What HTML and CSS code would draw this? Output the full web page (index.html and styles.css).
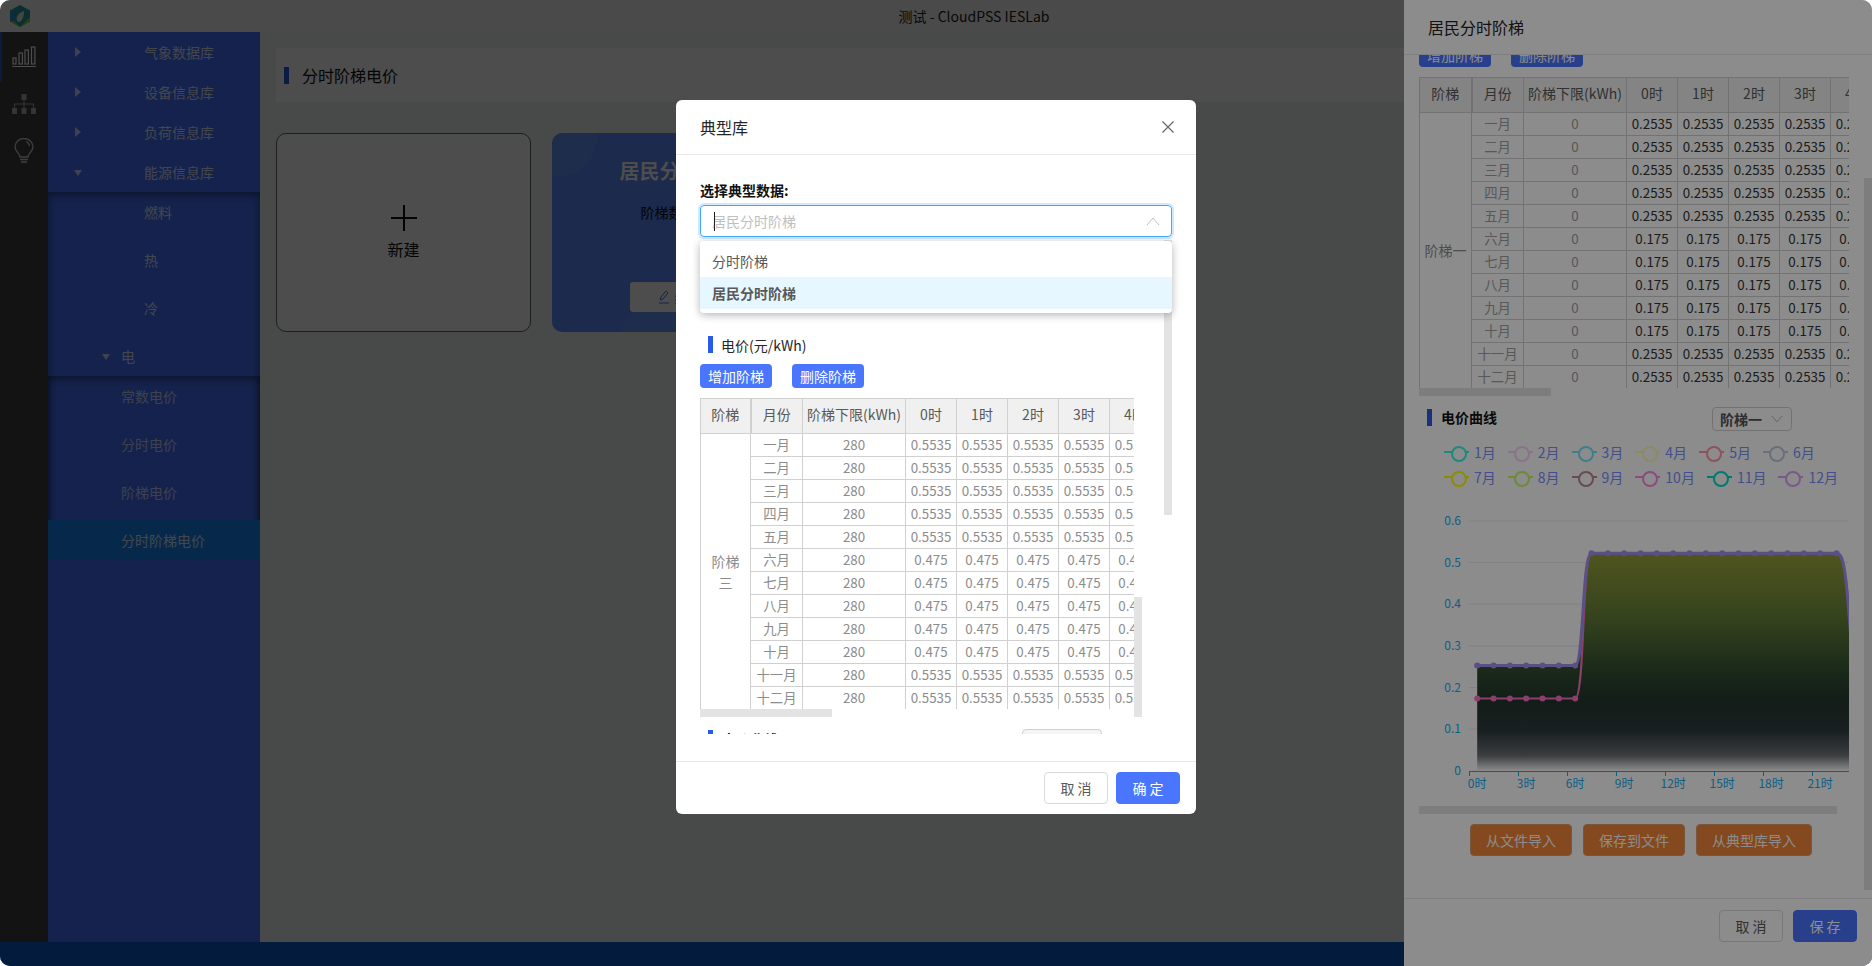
FILE: index.html
```html
<!DOCTYPE html>
<html lang="zh-CN">
<head>
    <meta charset="UTF-8">
    <title>测试 - CloudPSS IESLab</title>
    <link rel="stylesheet" href="styles.css">
</head>
<body>
<div class="window">
    <div class="app">
        <div class="topbar">
            <svg class="logo" viewBox="0 0 20 22">
                <path d="M10 0 L20 5.5 V16.5 L10 22 L0 16.5 V5.5 Z" fill="#1f9fa8"/>
                <path d="M0 12 L10 22 L20 12 V16.5 L10 22 L0 16.5 Z" fill="#8fd03c"/>
                <path d="M0 5.5 L6 9 V15 L0 16.5 Z" fill="#2e8fd0"/>
                <path d="M14 6 C14 12 12 17 8 17 C5 14 7 8 14 6 Z" fill="#e8e8d8"/>
            </svg>
            <span class="topbar-title">测试 - CloudPSS IESLab</span>
        </div>
        <div class="middle">
            <div class="rail">
                <div class="rail-item rail-active">
                    <svg width="26" height="22" viewBox="0 0 26 22" fill="none" stroke="#fff" stroke-width="1.2">
                        <rect x="2" y="12" width="3" height="6"/>
                        <rect x="8" y="7" width="3.4" height="11"/>
                        <rect x="14" y="4" width="3.4" height="14"/>
                        <rect x="20.5" y="1" width="3.4" height="17"/>
                        <path d="M1 20.5 H25"/>
                    </svg>
                </div>
                <div class="rail-item">
                    <svg width="26" height="22" viewBox="0 0 26 22" fill="#b0b0b0">
                        <rect x="10.5" y="1" width="5" height="6"/>
                        <rect x="1" y="15" width="5" height="6"/>
                        <rect x="10.5" y="15" width="5" height="6"/>
                        <rect x="20" y="15" width="5" height="6"/>
                        <path d="M12.5 7 H13.5 V10.5 H23 V15 H22 V11.5 H13.5 V15 H12.5 V11.5 H4 V15 H3 V10.5 H12.5 Z"/>
                    </svg>
                </div>
                <div class="rail-item">
                    <svg width="22" height="26" viewBox="0 0 22 26" fill="none" stroke="#d0d0d0" stroke-width="1.3">
                        <path d="M7 19 C7 15 2 13.5 2 9 A9 8.5 0 0 1 20 9 C20 13.5 15 15 15 19 Z"/>
                        <path d="M7 21.5 H15 M8 24 H14"/>
                        <path d="M13 3.5 A5.5 5.5 0 0 1 16.5 8"/>
                    </svg>
                </div>
            </div>
            <div class="sidebar">
                <div class="menu-item"><span class="arrow-r"></span>气象数据库</div>
                <div class="menu-item"><span class="arrow-r"></span>设备信息库</div>
                <div class="menu-item"><span class="arrow-r"></span>负荷信息库</div>
                <div class="menu-item"><span class="arrow-d"></span>能源信息库</div>
                <div class="submenu">
                    <div class="menu-item sub-item">燃料</div>
                    <div class="menu-item sub-item">热</div>
                    <div class="menu-item sub-item">冷</div>
                    <div class="menu-item sub-item sub-open"><span class="arrow-d"></span>电</div>
                    <div class="submenu submenu-inner">
                        <div class="menu-item sub-item leaf">常数电价</div>
                        <div class="menu-item sub-item leaf">分时电价</div>
                        <div class="menu-item sub-item leaf">阶梯电价</div>
                        <div class="menu-item sub-item leaf leaf-active">分时阶梯电价</div>
                    </div>
                </div>
            </div>
            <div class="main">
                <div class="page-head"><span class="page-bar"></span>分时阶梯电价</div>
                <div class="cards">
                    <div class="card card-new">
                        <svg width="26" height="26" viewBox="0 0 26 26" fill="#111"><rect x="12" y="0" width="2" height="26"/><rect x="0" y="12" width="26" height="2"/></svg>
                        <span class="card-new-text">新建</span>
                    </div>
                    <div class="card card-tpl">
                        <span class="tpl-circle-a"></span>
                        <span class="tpl-circle-b"></span>
                        <div class="tpl-title">居民分时阶梯</div>
                        <div class="tpl-info">阶梯数量：3</div>
                        <div class="tpl-btn">
                            <svg width="12" height="14" viewBox="0 0 12 14" fill="none" stroke="#4a76ff" stroke-width="1"><path d="M2 10 L3 7 L8 1 L10 3 L5 9 Z M1 13 H11"/></svg>
                            编辑
                        </div>
                    </div>
                </div>
            </div>
        </div>
        <div class="bottombar"></div>
    </div>

    <div class="mask"></div>

    <div class="drawer">
        <div class="drawer-head">居民分时阶梯</div>
        <div class="drawer-body">
            <div class="drawer-scroll">
                <div class="btn-row">
                    <button class="btn-tier">增加阶梯</button>
                    <button class="btn-tier">删除阶梯</button>
                </div>
                <div class="tbl-wrap tbl-wrap-drawer">
                    <div class="tbl-clip">
                        <table class="tbl tbl-drawer">
                            <colgroup><col class="c-tier"><col class="c-month"><col class="c-limit"><col class="c-h"><col class="c-h"><col class="c-h"><col class="c-h"><col class="c-h"></colgroup>
                            <tr class="tbl-head"><th>阶梯</th><th class="th-month">月份</th><th>阶梯下限(kWh)</th><th>0时</th><th>1时</th><th>2时</th><th>3时</th><th>4时</th></tr>
                            <tr><td rowspan="12" class="td-tier">阶梯一</td><td class="td-m">一月</td><td class="td-m">0</td><td>0.2535</td><td>0.2535</td><td>0.2535</td><td>0.2535</td><td>0.2535</td></tr>
                            <tr><td class="td-m">二月</td><td class="td-m">0</td><td>0.2535</td><td>0.2535</td><td>0.2535</td><td>0.2535</td><td>0.2535</td></tr>
                            <tr><td class="td-m">三月</td><td class="td-m">0</td><td>0.2535</td><td>0.2535</td><td>0.2535</td><td>0.2535</td><td>0.2535</td></tr>
                            <tr><td class="td-m">四月</td><td class="td-m">0</td><td>0.2535</td><td>0.2535</td><td>0.2535</td><td>0.2535</td><td>0.2535</td></tr>
                            <tr><td class="td-m">五月</td><td class="td-m">0</td><td>0.2535</td><td>0.2535</td><td>0.2535</td><td>0.2535</td><td>0.2535</td></tr>
                            <tr><td class="td-m">六月</td><td class="td-m">0</td><td>0.175</td><td>0.175</td><td>0.175</td><td>0.175</td><td>0.175</td></tr>
                            <tr><td class="td-m">七月</td><td class="td-m">0</td><td>0.175</td><td>0.175</td><td>0.175</td><td>0.175</td><td>0.175</td></tr>
                            <tr><td class="td-m">八月</td><td class="td-m">0</td><td>0.175</td><td>0.175</td><td>0.175</td><td>0.175</td><td>0.175</td></tr>
                            <tr><td class="td-m">九月</td><td class="td-m">0</td><td>0.175</td><td>0.175</td><td>0.175</td><td>0.175</td><td>0.175</td></tr>
                            <tr><td class="td-m">十月</td><td class="td-m">0</td><td>0.175</td><td>0.175</td><td>0.175</td><td>0.175</td><td>0.175</td></tr>
                            <tr><td class="td-m">十一月</td><td class="td-m">0</td><td>0.2535</td><td>0.2535</td><td>0.2535</td><td>0.2535</td><td>0.2535</td></tr>
                            <tr><td class="td-m">十二月</td><td class="td-m">0</td><td>0.2535</td><td>0.2535</td><td>0.2535</td><td>0.2535</td><td>0.2535</td></tr>
                        </table>
                    </div>
                    <div class="sb-h"></div>
                </div>
                <div class="curve-row">
                    <span class="sec-bar"></span>
                    <span class="curve-title">电价曲线</span>
                    <div class="sel-sm sel-drawer">阶梯一
                        <svg width="12" height="8" viewBox="0 0 12 8" fill="none" stroke="#bbb"><path d="M1 1 L6 7 L11 1"/></svg>
                    </div>
                </div>
                <div class="legend">
                    <div class="lg-item m1"><span class="mark"></span>1月</div>
                    <div class="lg-item m2"><span class="mark"></span>2月</div>
                    <div class="lg-item m3"><span class="mark"></span>3月</div>
                    <div class="lg-item m4"><span class="mark"></span>4月</div>
                    <div class="lg-item m5"><span class="mark"></span>5月</div>
                    <div class="lg-item m6"><span class="mark"></span>6月</div>
                    <div class="lg-item m7"><span class="mark"></span>7月</div>
                    <div class="lg-item m8"><span class="mark"></span>8月</div>
                    <div class="lg-item m9"><span class="mark"></span>9月</div>
                    <div class="lg-item m10"><span class="mark"></span>10月</div>
                    <div class="lg-item m11"><span class="mark"></span>11月</div>
                    <div class="lg-item m12"><span class="mark"></span>12月</div>
                </div>
                <svg class="chart" width="430" height="290" viewBox="0 0 430 290">
                    <defs>
                        <linearGradient id="areaFill" gradientUnits="userSpaceOnUse" x1="0" y1="43" x2="0" y2="261">
                            <stop offset="0" stop-color="#919b38"/>
                            <stop offset="0.3" stop-color="#607a36"/>
                            <stop offset="0.55" stop-color="#2f4a2f"/>
                            <stop offset="0.68" stop-color="#24352c"/>
                            <stop offset="0.82" stop-color="#2f3a3e"/>
                            <stop offset="0.93" stop-color="#6d7174"/>
                            <stop offset="1" stop-color="#ffffff"/>
                        </linearGradient>
                        <marker id="dotP" markerUnits="userSpaceOnUse" markerWidth="8" markerHeight="8" refX="4" refY="4"><circle cx="4" cy="4" r="3" fill="#a692f5"/></marker>
                        <marker id="dotR" markerUnits="userSpaceOnUse" markerWidth="8" markerHeight="8" refX="4" refY="4"><circle cx="4" cy="4" r="3" fill="#ff73c5"/></marker>
                    </defs>
                    <g class="grid">
                        <path d="M50 11 H430 M50 52.5 H430 M50 94 H430 M50 136 H430 M50 177.5 H430 M50 219 H430"/>
                    </g>
                    <path d="M58.2 155.5 H156.2 C165 155.5 163 43.3 172.5 43.3 H417.5 C425 43.3 428 60 433.8 155 V261 H58.2 Z" fill="url(#areaFill)"/>
                    <path class="line-r" d="M58.2 188.4 H156.2 C166 188.4 163 43.3 172.5 43.3 H417.5 C425 43.3 429 70 433.8 155"/>
                    <path class="line-p" d="M58.2 155.5 H156.2 C165 155.5 163 43.3 172.5 43.3 H417.5 C425 43.3 427 58 433.8 155"/>
                    <polyline class="dots" marker-start="url(#dotR)" marker-mid="url(#dotR)" marker-end="url(#dotR)" points="58.2,188.4 74.5,188.4 90.9,188.4 107.2,188.4 123.5,188.4 139.9,188.4 156.2,188.4"/>
                    <polyline class="dots" marker-start="url(#dotP)" marker-mid="url(#dotP)" marker-end="url(#dotP)" points="58.2,155.5 74.5,155.5 90.9,155.5 107.2,155.5 123.5,155.5 139.9,155.5 156.2,155.5"/>
                    <polyline class="dots" marker-start="url(#dotP)" marker-mid="url(#dotP)" marker-end="url(#dotP)" points="172.5,43.3 188.8,43.3 205.2,43.3 221.5,43.3 237.8,43.3 254.2,43.3 270.5,43.3 286.8,43.3 303.2,43.3 319.5,43.3 335.8,43.3 352.1,43.3 368.5,43.3 384.8,43.3 401.1,43.3 417.5,43.3"/>
                    <path class="axis" d="M50 261.5 H430 M50.5 261 V266 M99.5 261 V266 M148.5 261 V266 M197.5 261 V266 M246.5 261 V266 M295.5 261 V266 M344.5 261 V266 M393.5 261 V266"/>
                    <g class="y-labels">
                        <text x="42" y="15">0.6</text>
                        <text x="42" y="56.5">0.5</text>
                        <text x="42" y="98">0.4</text>
                        <text x="42" y="140">0.3</text>
                        <text x="42" y="181.5">0.2</text>
                        <text x="42" y="223">0.1</text>
                        <text x="42" y="265">0</text>
                    </g>
                    <g class="x-labels">
                        <text x="58.2" y="278">0时</text>
                        <text x="107.2" y="278">3时</text>
                        <text x="156.2" y="278">6时</text>
                        <text x="205.2" y="278">9时</text>
                        <text x="254.2" y="278">12时</text>
                        <text x="303.2" y="278">15时</text>
                        <text x="352.1" y="278">18时</text>
                        <text x="401.1" y="278">21时</text>
                    </g>
                </svg>
                <div class="sb-chart"></div>
                <div class="import-row">
                    <button class="btn-import">从文件导入</button>
                    <button class="btn-import">保存到文件</button>
                    <button class="btn-import">从典型库导入</button>
                </div>
            </div>
            <div class="sb-drawer"></div>
        </div>
        <div class="drawer-foot">
            <button class="btn btn-plain">取 消</button>
            <button class="btn btn-primary">保 存</button>
        </div>
    </div>

    <div class="mask"></div>

    <div class="dialog">
        <div class="dlg-head">
            <span>典型库</span>
            <svg width="14" height="14" viewBox="0 0 14 14" stroke="#666" stroke-width="1.2"><path d="M1.5 1.5 L12.5 12.5 M12.5 1.5 L1.5 12.5"/></svg>
        </div>
        <div class="dlg-body">
            <div class="dlg-scroll">
                <div class="field-label">选择典型数据:</div>
                <div class="select-open">
                    <span class="caret"></span>
                    <span>居民分时阶梯</span>
                    <svg width="14" height="9" viewBox="0 0 14 9" fill="none" stroke="#bfbfbf" stroke-width="1"><path d="M1 8 L7 1 L13 8"/></svg>
                </div>
                <div class="sec-title"><span class="sec-bar"></span>电价(元/kWh)</div>
                <div class="btn-row">
                    <button class="btn-tier">增加阶梯</button>
                    <button class="btn-tier">删除阶梯</button>
                </div>
                <div class="tbl-wrap">
                    <div class="tbl-clip">
                        <table class="tbl tbl-dlg">
                            <colgroup><col class="c-tier"><col class="c-month"><col class="c-limit"><col class="c-h"><col class="c-h"><col class="c-h"><col class="c-h"><col class="c-h"></colgroup>
                            <tr class="tbl-head"><th>阶梯</th><th class="th-month">月份</th><th>阶梯下限(kWh)</th><th>0时</th><th>1时</th><th>2时</th><th>3时</th><th>4时</th></tr>
                            <tr><td rowspan="12" class="td-tier">阶梯三</td><td>一月</td><td>280</td><td>0.5535</td><td>0.5535</td><td>0.5535</td><td>0.5535</td><td>0.5535</td></tr>
                            <tr><td>二月</td><td>280</td><td>0.5535</td><td>0.5535</td><td>0.5535</td><td>0.5535</td><td>0.5535</td></tr>
                            <tr><td>三月</td><td>280</td><td>0.5535</td><td>0.5535</td><td>0.5535</td><td>0.5535</td><td>0.5535</td></tr>
                            <tr><td>四月</td><td>280</td><td>0.5535</td><td>0.5535</td><td>0.5535</td><td>0.5535</td><td>0.5535</td></tr>
                            <tr><td>五月</td><td>280</td><td>0.5535</td><td>0.5535</td><td>0.5535</td><td>0.5535</td><td>0.5535</td></tr>
                            <tr><td>六月</td><td>280</td><td>0.475</td><td>0.475</td><td>0.475</td><td>0.475</td><td>0.475</td></tr>
                            <tr><td>七月</td><td>280</td><td>0.475</td><td>0.475</td><td>0.475</td><td>0.475</td><td>0.475</td></tr>
                            <tr><td>八月</td><td>280</td><td>0.475</td><td>0.475</td><td>0.475</td><td>0.475</td><td>0.475</td></tr>
                            <tr><td>九月</td><td>280</td><td>0.475</td><td>0.475</td><td>0.475</td><td>0.475</td><td>0.475</td></tr>
                            <tr><td>十月</td><td>280</td><td>0.475</td><td>0.475</td><td>0.475</td><td>0.475</td><td>0.475</td></tr>
                            <tr><td>十一月</td><td>280</td><td>0.5535</td><td>0.5535</td><td>0.5535</td><td>0.5535</td><td>0.5535</td></tr>
                            <tr><td>十二月</td><td>280</td><td>0.5535</td><td>0.5535</td><td>0.5535</td><td>0.5535</td><td>0.5535</td></tr>
                        </table>
                    </div>
                    <div class="sb-h"></div>
                    <div class="sb-v"></div>
                </div>
                <div class="curve-row curve-row-dlg">
                    <span class="sec-bar"></span>
                    <span class="curve-title">电价曲线</span>
                    <div class="sel-sm sel-dlg">阶梯一</div>
                </div>
            </div>
        </div>
        <div class="sb-dlg"></div>
        <div class="dropdown">
            <div class="dd-item">分时阶梯</div>
            <div class="dd-item dd-active">居民分时阶梯</div>
        </div>
        <div class="dlg-foot">
            <button class="btn btn-plain">取 消</button>
            <button class="btn btn-primary">确 定</button>
        </div>
    </div>
</div>
</body>
</html>
```
FILE: styles.css
```css
* {
    margin: 0;
    padding: 0;
    box-sizing: border-box;
}

body {
    font-family: "Noto Sans CJK SC", "Noto Sans", sans-serif;
    font-size: 14px;
    background-color: #fff;
    overflow: hidden;
}

button {
    font-family: inherit;
    font-size: 14px;
    cursor: pointer;
}

.window {
    position: relative;
    width: 1872px;
    height: 966px;
    border-radius: 10px;
    overflow: hidden;
}

.app {
    display: flex;
    flex-direction: column;
    height: 100%;
    background-color: #f0f2f5;
}

.mask {
    position: absolute;
    inset: 0;
    background-color: rgba(0, 0, 0, 0.45);
}

/* top bar */
.topbar {
    height: 32px;
    flex: none;
    display: flex;
    align-items: center;
    justify-content: center;
    padding-left: 76px;
    background-color: #f8f8f8;
    position: relative;
}

.logo {
    position: absolute;
    left: 10px;
    top: 5px;
    width: 20px;
    height: 22px;
}

.topbar-title {
    color: #222;
    font-size: 14px;
}

.middle {
    flex: 1;
    display: flex;
    min-height: 0;
}

.bottombar {
    height: 24px;
    flex: none;
    background-color: #0d60d0;
}

/* icon rail */
.rail {
    width: 48px;
    flex: none;
    background-color: #424242;
}

.rail-item {
    height: 50px;
    display: flex;
    align-items: center;
    justify-content: center;
    margin-bottom: -3px;
}

.rail-active {
    border-left: 2px solid #2a5ac8;
    padding-right: 2px;
}

/* side menu */
.sidebar {
    width: 212px;
    flex: none;
    background-color: #4674ff;
}

.menu-item {
    height: 40px;
    line-height: 40px;
    padding-left: 96px;
    position: relative;
    color: rgba(255, 255, 255, 0.85);
}

.arrow-r {
    position: absolute;
    left: 27px;
    top: 15px;
    border-left: 6px solid rgba(255, 255, 255, 0.75);
    border-top: 5px solid transparent;
    border-bottom: 5px solid transparent;
}

.arrow-d {
    position: absolute;
    left: 26px;
    top: 18px;
    border-top: 6px solid rgba(255, 255, 255, 0.75);
    border-left: 4.5px solid transparent;
    border-right: 4.5px solid transparent;
}

.submenu {
    box-shadow: inset 0 3px 8px rgba(0, 0, 0, 0.45);
}

.sub-item {
    margin-bottom: 8px;
}

.sub-open {
    padding-left: 73px;
    margin-left: 48px;
    margin-bottom: 0;
    padding-left: 25px;
}

.sub-open .arrow-d {
    left: 6px;
}

.submenu-inner {
    margin-bottom: 0;
}

.leaf {
    padding-left: 73px;
    opacity: 0.85;
}

.leaf-active {
    background-color: #1787f8;
    opacity: 1;
    margin-bottom: 0;
}

/* main area */
.main {
    flex: 1;
    padding: 16px;
}

.page-head {
    height: 54px;
    background-color: #fff;
    display: flex;
    align-items: center;
    padding-left: 8px;
    font-size: 16px;
    color: #111;
}

.page-bar {
    width: 5px;
    height: 17px;
    background-color: #2a5ae8;
    margin-right: 13px;
}

.cards {
    display: flex;
    gap: 21px;
    margin-top: 31px;
}

.card {
    width: 255px;
    height: 199px;
    border-radius: 10px;
    position: relative;
    overflow: hidden;
}

.card-new {
    border: 1px solid #666;
    background-color: #fff;
    display: flex;
    flex-direction: column;
    align-items: center;
    padding-top: 71px;
}

.card-new-text {
    font-size: 16px;
    color: #111;
    margin-top: 6px;
}

.card-tpl {
    background-color: #5c8cff;
    text-align: center;
}

.tpl-circle-a {
    position: absolute;
    left: -30px;
    top: -50px;
    width: 76px;
    height: 94px;
    border-radius: 50%;
    background-color: rgba(255, 255, 255, 0.08);
}

.tpl-circle-b {
    position: absolute;
    left: 58px;
    top: 135px;
    width: 260px;
    height: 200px;
    border-radius: 50%;
    background-color: rgba(255, 255, 255, 0.08);
}

.tpl-title {
    position: relative;
    margin-top: 24px;
    font-size: 20px;
    font-weight: 700;
    line-height: 28px;
    color: #fff;
}

.tpl-info {
    position: relative;
    margin-top: 16px;
    color: #111;
    line-height: 22px;
}

.tpl-btn {
    position: absolute;
    left: 78px;
    top: 149px;
    width: 100px;
    height: 30px;
    border-radius: 3px;
    background-color: #fff;
    color: #4a76ff;
    display: flex;
    align-items: center;
    justify-content: center;
    gap: 5px;
}

/* drawer */
.drawer {
    position: absolute;
    right: 0;
    top: 0;
    width: 468px;
    height: 966px;
    background-color: #fff;
    display: flex;
    flex-direction: column;
}

.drawer-head {
    height: 55px;
    flex: none;
    padding-left: 24px;
    line-height: 54px;
    font-size: 16px;
    color: #222;
    border-bottom: 1px solid #e8e8e8;
}

.drawer-body {
    height: 843px;
    flex: none;
    overflow: hidden;
    position: relative;
}

.drawer-scroll {
    margin-top: -12px;
    padding-left: 15px;
}

.sb-drawer {
    position: absolute;
    right: 0;
    top: 123px;
    width: 8px;
    height: 712px;
    background-color: #e3e3e3;
}

.drawer-foot {
    flex: 1;
    border-top: 1px solid #e8e8e8;
    display: flex;
    justify-content: flex-end;
    gap: 10px;
    padding: 11px 15px 0 0;
}

/* buttons */
.btn-row {
    display: flex;
    gap: 20px;
}

.btn-tier {
    width: 72px;
    height: 24px;
    border: none;
    border-radius: 4px;
    background-color: #4a76ff;
    color: #fff;
}

.btn {
    width: 64px;
    height: 32px;
    border-radius: 4px;
}

.btn-plain {
    background-color: #fff;
    border: 1px solid #d9d9d9;
    color: #595959;
}

.btn-primary {
    background-color: #4a76ff;
    border: 1px solid #4a76ff;
    color: #fff;
}

.btn-import {
    height: 32px;
    padding: 0 15px;
    border: 1px solid #d9a070;
    border-radius: 4px;
    background-color: #f08538;
    color: #fff;
}

.import-row {
    display: flex;
    gap: 11px;
    margin-top: 10px;
    padding-left: 51px;
}

/* tables */
.tbl-wrap {
    position: relative;
    width: 442px;
    height: 319px;
    margin-top: 10px;
}

.tbl-wrap-drawer {
    width: 430px;
}

.tbl-clip {
    width: 434px;
    height: 311px;
    overflow: hidden;
}

.tbl-wrap-drawer .tbl-clip {
    width: 430px;
}

.tbl {
    border-collapse: collapse;
    table-layout: fixed;
    width: 460px;
    text-align: center;
    font-size: 13.33px;
    color: #8c8c8c;
}

.tbl-drawer {
    width: 462px;
    color: #333;
}

.c-tier {
    width: 50px;
}

.tbl-drawer .c-tier {
    width: 52px;
}

.c-month {
    width: 52px;
}

.c-limit {
    width: 103px;
}

.c-h {
    width: 51px;
}

.tbl th,
.tbl td {
    border: 1px solid #d0d0d0;
    padding: 0;
    white-space: nowrap;
    overflow: hidden;
}

.tbl td {
    height: 23px;
    line-height: 22px;
}

.tbl-head th {
    height: 35px;
    background-color: #f0f0f0;
    font-size: 14px;
    font-weight: 400;
    color: #595959;
    padding-bottom: 4px;
}

.tbl .th-month {
    border-left: 2px solid #d0d0d0;
}

.tbl .td-tier {
    font-size: 14px;
    line-height: 21px;
    white-space: normal;
    padding: 0 8px;
}

.tbl-drawer .td-tier {
    white-space: nowrap;
    padding: 0;
    color: #8c8c8c;
}

.tbl-drawer .td-m {
    color: #a0a0a0;
}

.sb-h {
    position: absolute;
    left: 0;
    bottom: 0;
    width: 132px;
    height: 8px;
    background-color: #e3e3e3;
}

.sb-v {
    position: absolute;
    right: 0;
    top: 199px;
    width: 8px;
    height: 120px;
    background-color: #e3e3e3;
}

/* section titles */
.sec-bar {
    width: 5px;
    height: 17px;
    flex: none;
    background-color: #2a5ae8;
}

.sec-title {
    display: flex;
    align-items: center;
    gap: 8px;
    height: 17px;
    margin-top: 99px;
    margin-bottom: 11px;
    padding-left: 8px;
    color: #262626;
}

.curve-row {
    display: flex;
    height: 24px;
    margin-top: 11px;
    padding-left: 8px;
}

.curve-row .sec-bar {
    margin-top: 2px;
}

.curve-row-dlg {
    margin-top: 12px;
}

.curve-row-dlg .sec-bar {
    margin-top: 1px;
}

.curve-title {
    margin-left: 9px;
    width: 56px;
    font-weight: 700;
    color: #111;
    line-height: 20px;
}

.sel-sm {
    width: 80px;
    height: 24px;
    border: 1px solid #d0d0d0;
    border-radius: 4px;
    line-height: 22px;
    padding-left: 7px;
    display: flex;
    align-items: center;
    justify-content: space-between;
    padding-right: 8px;
}

.sel-drawer {
    margin-left: 215px;
    font-weight: 700;
    color: #555;
}

.sel-dlg {
    margin-left: 244px;
    color: #bfbfbf;
    background-color: #f5f5f5;
}

/* legend */
.legend {
    display: flex;
    flex-wrap: wrap;
    column-gap: 12px;
    width: 405px;
    margin: 8px 0 0 25px;
}

.lg-item {
    display: flex;
    align-items: center;
    gap: 5px;
    height: 25px;
}

.lg-item::after {
    content: none;
}

.lg-item {
    font-size: 14px;
}

.mark {
    display: block;
    width: 25px;
    height: 2px;
    background-color: currentColor;
    position: relative;
}

.mark::after {
    content: "";
    position: absolute;
    left: 6.5px;
    top: -5px;
    width: 12px;
    height: 12px;
    border: 2px solid currentColor;
    border-radius: 50%;
    background-color: #fff;
}

.m1 { color: #35fbe9; }
.m2 { color: #fbcfff; }
.m3 { color: #71e7ff; }
.m4 { color: #fffbaf; }
.m5 { color: #ff95ad; }
.m6 { color: #c1cae9; }
.m7 { color: #ffff00; }
.m8 { color: #c8fb5f; }
.m9 { color: #c18791; }
.m10 { color: #ff87e9; }
.m11 { color: #00decc; }
.m12 { color: #dea0ff; }

.lg-item {
    -webkit-text-fill-color: #7a8fff;
}

/* chart */
.chart {
    display: block;
    margin-top: 21px;
    font-size: 12px;
    font-family: "Noto Sans CJK SC", sans-serif;
}

.grid path {
    stroke: #ececec;
    stroke-width: 1;
    fill: none;
}

.line-p,
.line-r,
.dots {
    fill: none;
}

.line-p {
    stroke: #a692f5;
    stroke-width: 3;
}

.line-r {
    stroke: #ff73c5;
    stroke-width: 2;
}

.dots {
    stroke: none;
}

.axis {
    stroke: #18adf4;
    stroke-width: 1;
    fill: none;
}

.y-labels text {
    text-anchor: end;
    fill: #18adf4;
}

.x-labels text {
    text-anchor: middle;
    fill: #18adf4;
}

.sb-chart {
    width: 418px;
    height: 8px;
    margin-top: 6px;
    background-color: #e3e3e3;
}

/* dialog */
.dialog {
    position: absolute;
    left: 676px;
    top: 100px;
    width: 520px;
    height: 714px;
    background-color: #fff;
    border-radius: 6px;
    display: flex;
    flex-direction: column;
}

.dlg-head {
    height: 55px;
    flex: none;
    display: flex;
    align-items: center;
    justify-content: space-between;
    padding: 0 21px 0 24px;
    font-size: 16px;
    color: #262626;
    border-bottom: 1px solid #e8e8e8;
}

.dlg-body {
    height: 606px;
    flex: none;
    padding: 24px 24px 24px 24px;
}

.dlg-scroll {
    height: 558px;
    overflow: hidden;
}

.field-label {
    font-weight: 700;
    line-height: 22px;
    color: #111;
}

.select-open {
    position: relative;
    width: 472px;
    height: 32px;
    margin-top: 4px;
    margin-left: 0;
    display: flex;
    align-items: center;
    justify-content: space-between;
    padding: 0 11px;
    border: 1px solid #40a9ff;
    border-radius: 4px;
    color: #bfbfbf;
}

.dlg-scroll {
    padding: 3px;
    margin: -3px;
}

.caret {
    position: absolute;
    left: 13px;
    top: 6px;
    width: 1px;
    height: 19px;
    background-color: #222;
}

.select-open {
    box-shadow: 0 0 0 2px rgba(24, 144, 255, 0.2);
}

.dropdown {
    position: absolute;
    left: 24px;
    top: 141px;
    width: 472px;
    padding: 4px 0;
    border-radius: 4px;
    background-color: #fff;
    box-shadow: 0 2px 8px rgba(0, 0, 0, 0.3);
    color: #595959;
}

.dd-item {
    height: 32px;
    line-height: 32px;
    padding-left: 12px;
}

.dd-active {
    background-color: #e6f7ff;
    font-weight: 700;
}

.sb-dlg {
    position: absolute;
    left: 488px;
    top: 140px;
    width: 8px;
    height: 275px;
    background-color: #e3e3e3;
}

.dlg-foot {
    flex: 1;
    border-top: 1px solid #e8e8e8;
    display: flex;
    justify-content: flex-end;
    gap: 8px;
    padding: 10px 16px 0 0;
}
```
